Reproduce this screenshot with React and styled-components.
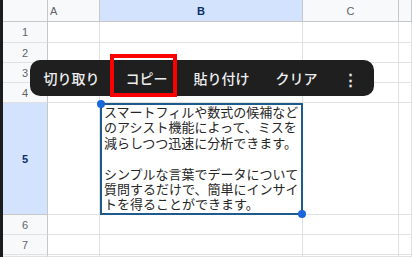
import styled, { createGlobalStyle } from 'styled-components';

const GlobalStyle = createGlobalStyle`
  html, body {
    margin: 0;
    padding: 0;
    background: #fff;
  }
  body {
    font-family: "Noto Sans CJK JP", "Noto Sans", sans-serif;
  }
`;

const Frame = styled.div`
  position: relative;
  width: 412px;
  height: 257px;
  overflow: hidden;
  border-left: 3px solid #1c1c1c;
  box-sizing: border-box;
`;

const Grid = styled.div`
  display: grid;
  grid-template-columns: 45px 52px 203px 96px 1fr;
  grid-template-rows: 22px 21px 20px 20px 20px 112px 20px 20px 1fr;
  height: 100%;
`;

const Cell = styled.div`
  border-right: 1px solid #e1e1e1;
  border-bottom: 1px solid #e1e1e1;
  box-sizing: border-box;
  background: #fff;
`;

const Header = styled(Cell)`
  display: flex;
  align-items: center;
  justify-content: ${({ $align }) => $align || 'center'};
  padding-left: ${({ $align }) => ($align ? '2px' : '0')};
  font-family: "Liberation Sans", Arial, sans-serif;
  font-size: 11px;
  color: ${({ $active }) => ($active ? '#0b2f6b' : '#5f6368')};
  font-weight: ${({ $active }) => ($active ? 700 : 400)};
  background: ${({ $active }) => ($active ? '#d3e3fd' : '#f8f9fa')};
  border-right-color: #c7c7c7;
  border-bottom-color: #c7c7c7;
`;

const RowNum = styled(Header)`
  border-bottom-color: ${({ $active }) => ($active ? '#c7c7c7' : '#e1e1e1')};
`;

const Corner = styled(Header)``;

const TextCell = styled(Cell)`
  position: relative;
  border: 2px solid #1f5a8c;
  padding: 0 0 0 2px;
`;

const CellText = styled.p`
  margin: -1px 0 0;
  font-size: 13px;
  line-height: 15.4px;
  color: #262626;
  white-space: pre-line;
`;

const Handle = styled.span`
  position: absolute;
  width: 8px;
  height: 8px;
  border-radius: 50%;
  background: #1a66dc;
  ${({ $pos }) =>
    $pos === 'start' ? 'left: -5px; top: -5px;' : 'right: -5px; bottom: -5px;'}
`;

const Toolbar = styled.div`
  position: absolute;
  left: 27px;
  top: 60px;
  width: 344px;
  height: 36px;
  box-sizing: border-box;
  padding-left: 4px;
  display: flex;
  align-items: center;
  background: #1f1f1f;
  border-radius: 10px;
`;

const Action = styled.div`
  position: relative;
  width: ${({ $narrow }) => ($narrow ? '32px' : '75px')};
  height: 100%;
  display: flex;
  align-items: center;
  justify-content: center;
  color: #eeeeee;
  font-size: 14px;
  font-weight: 500;
`;

const Highlight = styled.span`
  position: absolute;
  left: 1px;
  top: -6px;
  width: 67px;
  height: 43px;
  box-sizing: border-box;
  border: 4px solid #ff0000;
`;

const Kebab = styled.span`
  font-size: 15px;
  font-weight: 700;
`;

const text = `スマートフィルや数式の候補など
のアシスト機能によって、ミスを
減らしつつ迅速に分析できます。

シンプルな言葉でデータについて
質問するだけで、簡単にインサイ
トを得ることができます。`;

const rows = [1, 2, 3, 4, 5, 6, 7, 8];

export default function App() {
  return (
    <>
      <GlobalStyle />
      <Frame>
        <Grid>
          <Corner />
          <Header $align="flex-start">A</Header>
          <Header $active>B</Header>
          <Header>C</Header>
          <Header />
          {rows.map((r) => (
            <Row key={r} n={r} />
          ))}
        </Grid>
        <Toolbar>
          <Action>切り取り</Action>
          <Action>
            コピー
            <Highlight />
          </Action>
          <Action>貼り付け</Action>
          <Action>クリア</Action>
          <Action $narrow>
            <Kebab>⋮</Kebab>
          </Action>
        </Toolbar>
      </Frame>
    </>
  );
}

function Row({ n }) {
  const active = n === 5;
  return (
    <>
      <RowNum $active={active}>{n <= 7 ? n : ''}</RowNum>
      <Cell />
      {active ? (
        <TextCell>
          <CellText>{text}</CellText>
          <Handle $pos="start" />
          <Handle $pos="end" />
        </TextCell>
      ) : (
        <Cell />
      )}
      <Cell />
      <Cell />
    </>
  );
}
